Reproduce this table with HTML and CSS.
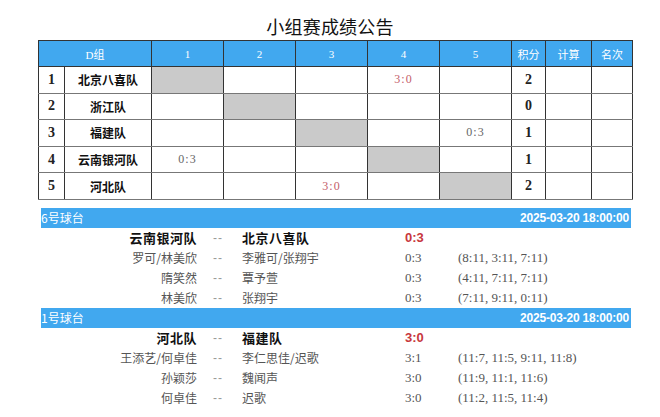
FILE: index.html
```html
<!DOCTYPE html>
<html lang="zh">
<head>
<meta charset="utf-8">
<title>小组赛成绩公告</title>
<link rel="stylesheet" href="styles.css">
</head>
<body>
<div class="page">
  <h1 class="title">小组赛成绩公告</h1>
  <table class="grid">
    <colgroup>
      <col class="c-no"><col class="c-team"><col class="c-m"><col class="c-m"><col class="c-m"><col class="c-m"><col class="c-m"><col class="c-pt"><col class="c-calc"><col class="c-rank">
    </colgroup>
    <thead>
      <tr><th colspan="2">D组</th><th>1</th><th>2</th><th>3</th><th>4</th><th>5</th><th>积分</th><th>计算</th><th>名次</th></tr>
    </thead>
    <tbody>
      <tr><td class="no">1</td><td class="team">北京八喜队</td><td class="self"></td><td></td><td></td><td class="sc win">3:0</td><td></td><td class="pt">2</td><td></td><td></td></tr>
      <tr><td class="no">2</td><td class="team">浙江队</td><td></td><td class="self"></td><td></td><td></td><td></td><td class="pt">0</td><td></td><td></td></tr>
      <tr><td class="no">3</td><td class="team">福建队</td><td></td><td></td><td class="self"></td><td></td><td class="sc">0:3</td><td class="pt">1</td><td></td><td></td></tr>
      <tr><td class="no">4</td><td class="team">云南银河队</td><td class="sc">0:3</td><td></td><td></td><td class="self"></td><td></td><td class="pt">1</td><td></td><td></td></tr>
      <tr><td class="no">5</td><td class="team">河北队</td><td></td><td></td><td class="sc win">3:0</td><td></td><td class="self"></td><td class="pt">2</td><td></td><td></td></tr>
    </tbody>
  </table>

  <section class="match">
    <div class="bar"><span class="table-name">6号球台</span><span class="time">2025-03-20 18:00:00</span></div>
    <div class="row head"><span class="l">云南银河队</span><span class="d">--</span><span class="r">北京八喜队</span><span class="s">0:3</span><span class="x"></span></div>
    <div class="row"><span class="l">罗可/林美欣</span><span class="d">--</span><span class="r">李雅可/张翔宇</span><span class="s">0:3</span><span class="x">(8:11, 3:11, 7:11)</span></div>
    <div class="row"><span class="l">隋笑然</span><span class="d">--</span><span class="r">覃予萱</span><span class="s">0:3</span><span class="x">(4:11, 7:11, 7:11)</span></div>
    <div class="row"><span class="l">林美欣</span><span class="d">--</span><span class="r">张翔宇</span><span class="s">0:3</span><span class="x">(7:11, 9:11, 0:11)</span></div>
  </section>

  <section class="match">
    <div class="bar"><span class="table-name">1号球台</span><span class="time">2025-03-20 18:00:00</span></div>
    <div class="row head"><span class="l">河北队</span><span class="d">--</span><span class="r">福建队</span><span class="s">3:0</span><span class="x"></span></div>
    <div class="row"><span class="l">王添艺/何卓佳</span><span class="d">--</span><span class="r">李仁思佳/迟歌</span><span class="s">3:1</span><span class="x">(11:7, 11:5, 9:11, 11:8)</span></div>
    <div class="row"><span class="l">孙颖莎</span><span class="d">--</span><span class="r">魏闻声</span><span class="s">3:0</span><span class="x">(11:9, 11:1, 11:6)</span></div>
    <div class="row"><span class="l">何卓佳</span><span class="d">--</span><span class="r">迟歌</span><span class="s">3:0</span><span class="x">(11:2, 11:5, 11:4)</span></div>
  </section>
</div>
</body>
</html>
```

FILE: styles.css
```css
* { box-sizing: border-box; }
html, body { margin: 0; padding: 0; background: #fff; }
.page {
  width: 660px;
  height: 417px;
  overflow: hidden;
  font-family: "Noto Sans CJK SC", "Liberation Sans", sans-serif;
  color: #222;
}
.title {
  margin: 0;
  padding-top: 14px;
  height: 40px;
  font-size: 18px;
  line-height: 24px;
  font-weight: normal;
  text-align: center;
  letter-spacing: 0.2px;
  color: #111;
}
.grid {
  margin-left: 38px;
  width: 594px;
  border-collapse: collapse;
  table-layout: fixed;
}
.c-no { width: 26px; }
.c-team { width: 87px; }
.c-m { width: 72px; }
.c-pt { width: 34px; }
.c-calc { width: 46px; }
.c-rank { width: 41px; }
.grid th, .grid td {
  padding: 0;
  text-align: center;
  vertical-align: middle;
}
.grid th {
  height: 26px;
  background: #41a8ef;
  color: #fff;
  font-size: 11px;
  font-weight: normal;
  border: 1px solid #333;
  font-family: "Liberation Serif", "Noto Sans CJK SC", serif;
}
.grid td {
  height: 26.6px;
  border-left: 1px solid #333;
  border-right: 1px solid #333;
  border-top: 1px solid #777;
  border-bottom: 1px solid #777;
  font-size: 12px;
}
.grid .no {
  font-family: "Liberation Serif", serif;
  font-weight: bold;
  font-size: 14px;
}
.grid .team {
  font-weight: bold;
  font-size: 12px;
  color: #111;
}
.grid .self { background: #cacaca; }
.grid .sc {
  font-family: "Liberation Serif", serif;
  font-size: 12px;
  letter-spacing: 1px;
  color: #666;
}
.grid .sc.win { color: #c4606a; }
.grid .pt {
  font-family: "Liberation Serif", serif;
  font-weight: bold;
  font-size: 14px;
}
.match {
  margin-left: 41px;
  width: 590px;
}
.grid + .match { margin-top: 8px; }
.bar {
  height: 20px;
  background: #41a8ef;
  color: #fff;
  display: flex;
  align-items: center;
  justify-content: space-between;
  padding: 0 2px 0 0;
}
.table-name {
  font-size: 12px;
}
.time {
  font-family: "Liberation Sans", sans-serif;
  font-weight: bold;
  font-size: 12px;
  letter-spacing: -0.2px;
}
.row {
  display: grid;
  grid-template-columns: 156px 45px 163px 53px 1fr;
  height: 20px;
  align-items: center;
  font-size: 12px;
  color: #555;
}
.row .l { text-align: right; white-space: nowrap; }
.row .d {
  padding-left: 16px;
  color: #999;
  font-family: "Liberation Sans", sans-serif;
  font-weight: normal;
  font-size: 12px;
  letter-spacing: 1px;
}
.row .r { white-space: nowrap; }
.row .s, .row .x {
  font-family: "Liberation Serif", serif;
  font-size: 13px;
  white-space: nowrap;
}
.row.head {
  color: #111;
  font-size: 13px;
  font-weight: bold;
  letter-spacing: 0.5px;
}
.row.head .s {
  font-family: "Liberation Sans", sans-serif;
  font-weight: bold;
  color: #c8373d;
  letter-spacing: 0;
}
```
